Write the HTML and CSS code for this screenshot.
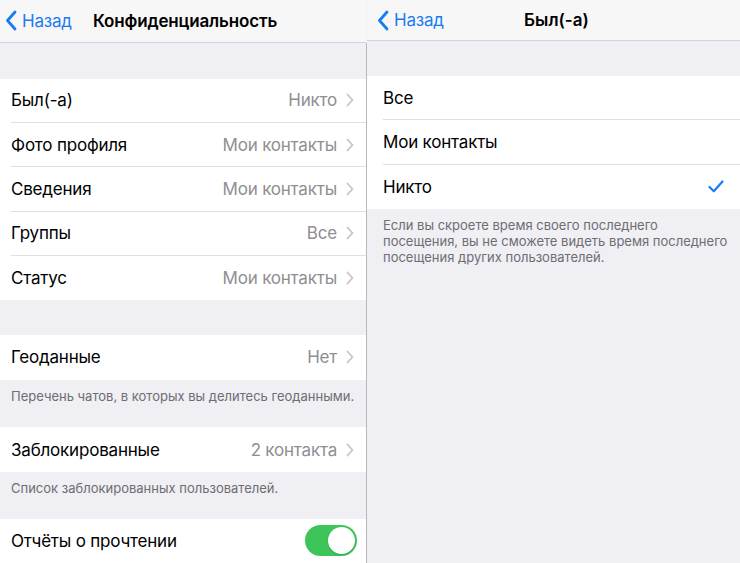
FILE: index.html
```html
<!DOCTYPE html>
<html lang="ru">
<head>
<meta charset="utf-8">
<title>Конфиденциальность</title>
<link rel="stylesheet" href="styles.css">
</head>
<body>
<div class="screens">
  <section class="panel left">
    <header class="nav nav-left">
      <a class="back">
        <svg class="back-icon" width="12" height="21" viewBox="0 0 12 21"><path d="M10 2 L2.5 10.5 L10 19" fill="none" stroke="#1a7cf2" stroke-width="2.8" stroke-linecap="round" stroke-linejoin="round"/></svg>
        <span>Назад</span>
      </a>
      <h1 class="title">Конфиденциальность</h1>
    </header>
    <div class="gap gap-top"></div>
    <ul class="group">
      <li class="row"><span class="label">Был(-а)</span><span class="value">Никто</span><svg class="chev" width="8" height="14" viewBox="0 0 8 14"><path d="M1.5 1.5 L6.5 7 L1.5 12.5" fill="none" stroke="#c4c4c9" stroke-width="1.8" stroke-linecap="round" stroke-linejoin="round"/></svg></li>
      <li class="row"><span class="label">Фото профиля</span><span class="value">Мои контакты</span><svg class="chev" width="8" height="14" viewBox="0 0 8 14"><path d="M1.5 1.5 L6.5 7 L1.5 12.5" fill="none" stroke="#c4c4c9" stroke-width="1.8" stroke-linecap="round" stroke-linejoin="round"/></svg></li>
      <li class="row"><span class="label">Сведения</span><span class="value">Мои контакты</span><svg class="chev" width="8" height="14" viewBox="0 0 8 14"><path d="M1.5 1.5 L6.5 7 L1.5 12.5" fill="none" stroke="#c4c4c9" stroke-width="1.8" stroke-linecap="round" stroke-linejoin="round"/></svg></li>
      <li class="row"><span class="label">Группы</span><span class="value">Все</span><svg class="chev" width="8" height="14" viewBox="0 0 8 14"><path d="M1.5 1.5 L6.5 7 L1.5 12.5" fill="none" stroke="#c4c4c9" stroke-width="1.8" stroke-linecap="round" stroke-linejoin="round"/></svg></li>
      <li class="row"><span class="label">Статус</span><span class="value">Мои контакты</span><svg class="chev" width="8" height="14" viewBox="0 0 8 14"><path d="M1.5 1.5 L6.5 7 L1.5 12.5" fill="none" stroke="#c4c4c9" stroke-width="1.8" stroke-linecap="round" stroke-linejoin="round"/></svg></li>
    </ul>
    <div class="gap gap-mid"></div>
    <ul class="group">
      <li class="row"><span class="label">Геоданные</span><span class="value">Нет</span><svg class="chev" width="8" height="14" viewBox="0 0 8 14"><path d="M1.5 1.5 L6.5 7 L1.5 12.5" fill="none" stroke="#c4c4c9" stroke-width="1.8" stroke-linecap="round" stroke-linejoin="round"/></svg></li>
    </ul>
    <p class="footer footer-left footer-geo">Перечень чатов, в которых вы делитесь геоданными.</p>
    <ul class="group">
      <li class="row"><span class="label">Заблокированные</span><span class="value">2 контакта</span><svg class="chev" width="8" height="14" viewBox="0 0 8 14"><path d="M1.5 1.5 L6.5 7 L1.5 12.5" fill="none" stroke="#c4c4c9" stroke-width="1.8" stroke-linecap="round" stroke-linejoin="round"/></svg></li>
    </ul>
    <p class="footer footer-left">Список заблокированных пользователей.</p>
    <ul class="group">
      <li class="row"><span class="label">Отчёты о прочтении</span><span class="toggle on"><span class="knob"></span></span></li>
    </ul>
  </section>
  <div class="divider"></div>
  <section class="panel right">
    <header class="nav nav-right">
      <a class="back">
        <svg class="back-icon" width="12" height="21" viewBox="0 0 12 21"><path d="M10 2 L2.5 10.5 L10 19" fill="none" stroke="#1a7cf2" stroke-width="2.8" stroke-linecap="round" stroke-linejoin="round"/></svg>
        <span>Назад</span>
      </a>
      <h1 class="title">Был(-а)</h1>
    </header>
    <div class="gap gap-top-r"></div>
    <ul class="group group-r">
      <li class="row"><span class="label">Все</span></li>
      <li class="row"><span class="label">Мои контакты</span></li>
      <li class="row"><span class="label">Никто</span><svg class="check" width="16" height="13" viewBox="0 0 16 13"><path d="M1.5 7 L5.8 11.3 L14.5 1.5" fill="none" stroke="#1a7cf2" stroke-width="2.2" stroke-linecap="round" stroke-linejoin="round"/></svg></li>
    </ul>
    <p class="footer footer-right">Если вы скроете время своего последнего посещения, вы не сможете видеть время последнего посещения других пользователей.</p>
  </section>
</div>
</body>
</html>
```
FILE: styles.css
```css
* { box-sizing: border-box; }
html, body {
  margin: 0;
  padding: 0;
  width: 740px;
  height: 563px;
  overflow: hidden;
  background: #efeff4;
  font-family: Inter, "Noto Sans", sans-serif;
  color: #000;
}
.screens {
  display: flex;
  width: 740px;
  height: 563px;
}
.panel {
  display: flex;
  flex-direction: column;
  background: #efeff4;
}
.left { width: 366px; }
.right { flex: 1; }
.divider {
  width: 1px;
  margin-top: 43px;
  background: #b8b8bc;
}
.nav {
  position: relative;
  display: flex;
  align-items: center;
  background: #f7f7f8;
  border-bottom: 1px solid #d4d4d8;
}
.nav-left { height: 44px; padding-left: 5px; }
.nav-right { height: 41px; padding-left: 10px; }
.back {
  display: flex;
  align-items: center;
  gap: 5px;
  color: #1a7cf2;
  font-size: 17px;
  letter-spacing: -0.2px;
}
.title {
  position: absolute;
  left: 0;
  right: 0;
  top: 0;
  bottom: 0;
  margin: 0;
  display: flex;
  align-items: center;
  justify-content: center;
  font-size: 17px;
  font-weight: 600;
  pointer-events: none;
}
.nav-left .title { padding-left: 4px; letter-spacing: -0.15px; }
.nav-right .title { padding-left: 6px; }
.gap-top { height: 37px; }
.gap-top-r { height: 35px; }
.gap-mid { height: 36px; }
.group {
  list-style: none;
  margin: 0;
  padding: 0 0 0 11px;
  background: #fff;
}
.group-r { padding-left: 16px; }
.row {
  display: flex;
  align-items: center;
  height: 44.3px;
  padding-right: 12px;
  font-size: 17px;
  letter-spacing: -0.2px;
  border-bottom: 1px solid #e0e0e4;
}
.row:last-child { border-bottom: none; }
.label { flex: 1; }
.value {
  color: #8e8e93;
  margin-right: 9px;
}
.chev { display: block; }
.check { display: block; }
.group-r .row { padding-right: 16px; }
.footer {
  margin: 0;
  color: #6d6d72;
  font-size: 13px;
  line-height: 16px;
}
.footer-left {
  height: 48px;
  padding: 8px 11px 0;
}
.footer-geo { height: 49px; }
.footer-right {
  padding: 8px 8px 0 16px;
}
.toggle {
  width: 52px;
  height: 31px;
  border-radius: 16px;
  background: #3dc55a;
  position: relative;
  margin-right: -3px;
}
.knob {
  position: absolute;
  top: 2px;
  right: 2px;
  width: 27px;
  height: 27px;
  border-radius: 50%;
  background: #fff;
  box-shadow: 0 1px 2px rgba(0,0,0,0.15);
}
```
